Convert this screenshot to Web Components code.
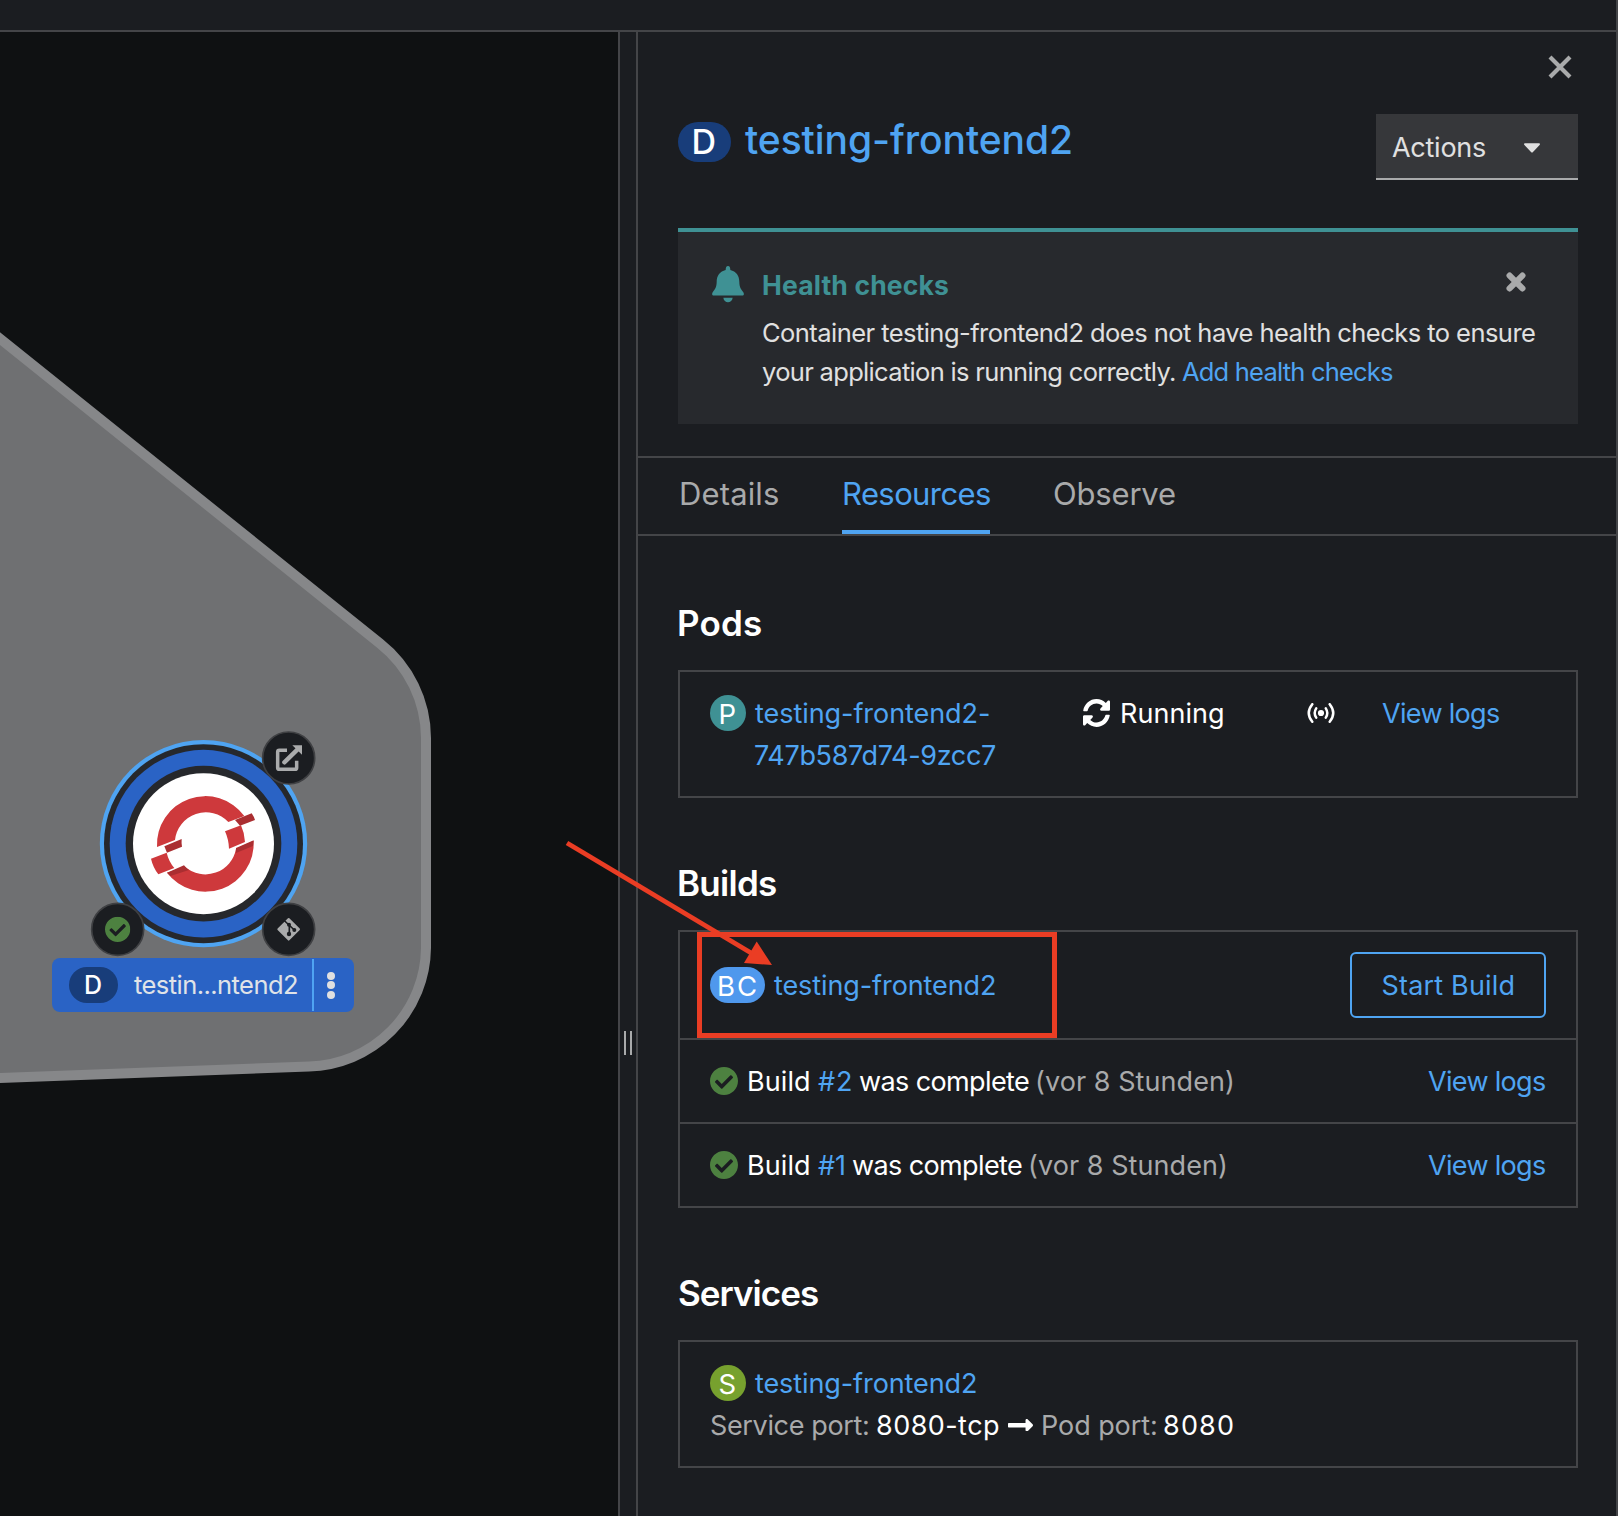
<!DOCTYPE html>
<html lang="en">
<head>
<meta charset="utf-8">
<title>Topology</title>
<style>
html,body{margin:0;padding:0;background:#1b1d21}
body{width:1618px;height:1516px;overflow:hidden;font-family:Inter,"Liberation Sans",sans-serif}
</style>
</head>
<body>
<console-shell></console-shell>
<script>
const BASE = `<style>
*{box-sizing:border-box}
.link{color:#4fa4f2}
.muted{color:#a9aaab}
</style>`;
const define = (name, html, extra) => customElements.define(name, class extends HTMLElement {
  constructor(){ super(); this.attachShadow({mode:'open'}); }
  connectedCallback(){
    if(!this.shadowRoot.childNodes.length){
      const t = document.createElement('template');
      t.innerHTML = BASE + (typeof html === 'function' ? html(this) : html);
      this.shadowRoot.append(t.content.cloneNode(true));
    }
    if(extra) extra(this);
  }
});

// A run of text tracked so that its visible glyphs fill the given width.
const ctx = document.createElement('canvas').getContext('2d');
define('ink-text', `<style>:host{display:inline-block;white-space:pre;flex:none}span{display:inline-block;transform:translateY(var(--drop,0px))}</style><span><slot></slot></span>`, el => {
  const w = +el.getAttribute('w'), text = el.textContent, cs = getComputedStyle(el);
  ctx.font = `${cs.fontWeight} ${cs.fontSize} ${cs.fontFamily}`;
  const m = ctx.measureText(text);
  el.style.width = w + 'px';
  if(text.length > 1) el.style.letterSpacing = ((w - m.actualBoundingBoxLeft - m.actualBoundingBoxRight) / (text.length - 1)).toFixed(3) + 'px';
  el.shadowRoot.querySelector('span').style.marginLeft = m.actualBoundingBoxLeft.toFixed(2) + 'px';
});

const ICONS = {
  check:['8 8 496 496','<path d="M504 256c0 136.967-111.033 248-248 248S8 392.967 8 256 119.033 8 256 8s248 111.033 248 248zM227.314 387.314l184-184c6.248-6.248 6.248-16.379 0-22.627l-22.627-22.627c-6.248-6.249-16.379-6.249-22.628 0L216 308.118l-70.059-70.059c-6.248-6.248-16.379-6.248-22.628 0l-22.627 22.627c-6.248 6.248-6.248 16.379 0 22.627l104 104c6.249 6.249 16.379 6.249 22.628.001z"/>'],
  sync:['8 8 496 496','<path d="M370.72 133.28C339.458 104.008 298.888 87.962 255.848 88c-77.458.068-144.328 53.178-162.791 126.85-1.344 5.363-6.122 9.15-11.651 9.15H24.103c-7.498 0-13.194-6.807-11.807-14.176C33.933 94.924 134.813 8 256 8c66.448 0 126.791 26.136 171.315 68.685L463.03 40.97C478.149 25.851 504 36.559 504 57.941V192c0 13.255-10.745 24-24 24H345.941c-21.382 0-32.09-25.851-16.971-40.971l41.75-41.749zM32 296h134.059c21.382 0 32.09 25.851 16.971 40.971l-41.75 41.75c31.262 29.273 71.835 45.319 114.876 45.28 77.418-.07 144.315-53.144 162.787-126.849 1.344-5.363 6.122-9.15 11.651-9.15h57.304c7.498 0 13.194 6.807 11.807 14.176C478.067 417.076 377.187 504 256 504c-66.448 0-126.791-26.136-171.315-68.685L48.97 471.03C33.851 486.149 8 475.441 8 454.059V320c0-13.255 10.745-24 24-24z"/>'],
  bell:['156 152 96 110','<path d="M204 152c-5 0-7 5-7 12C180 168 170 181 170 200C170 216 164 223 158 231C155 236 156 241 162 241H246C252 241 253 236 250 231C244 223 238 216 238 200C238 181 228 168 211 164C211 157 209 152 204 152ZM190 248H218C217 257 211 261.500 204 261.500C197 261.500 191 257 190 248Z"/>'],
  close:['0 0 24 24','<path d="M2 2L22 22M22 2L2 22" fill="none" stroke="currentColor" stroke-width="4.200"/>'],
  times:['0 0 20 20','<path d="M3.600 3.600L16.400 16.400M16.400 3.600L3.600 16.400" fill="none" stroke="currentColor" stroke-width="6.200" stroke-linecap="round"/>'],
  caret:['0 0 16 10','<path d="M1 .3H15C16.100 .3 16.300 1.200 15.600 1.900L9 8.900C8.300 9.600 7.700 9.600 7 8.900L.4 1.900C-.3 1.200-.1 .3 1 .3Z"/>'],
  antenna:['0 0 28 20','<circle cx="14" cy="10" r="3.100"/><path d="M9.200 5.300Q6.200 10 9.200 14.700M18.800 5.300Q21.800 10 18.800 14.700M5.300 1.200Q-1.800 10 5.300 18.800M22.700 1.200Q29.800 10 22.700 18.800" fill="none" stroke="currentColor" stroke-width="2.500" stroke-linecap="round"/>'],
  arrow:['0 145 448 222','<path d="M313.941 216H12c-6.627 0-12 5.373-12 12v56c0 6.627 5.373 12 12 12h301.941v46.059c0 21.382 25.851 32.090 40.971 16.971l86.059-86.059c9.373-9.373 9.373-24.569 0-33.941l-86.059-86.059c-15.119-15.119-40.971-4.411-40.971 16.971V216z"/>']
};
define('ui-icon', el => {
  const [vb, body] = ICONS[el.getAttribute('name')];
  return `<style>:host{display:block;flex:none;width:${el.getAttribute('w')}px;height:${el.getAttribute('h')}px}svg{display:block;width:100%;height:100%;fill:currentColor}</style><svg viewBox="${vb}" preserveAspectRatio="none">${body}</svg>`;
});

define('resource-badge', `<style>
:host{display:flex;flex:none;align-items:center;justify-content:center;width:36px;height:36px;border-radius:18px;color:#fff;font-size:27.500px;line-height:36px}
:host([kind=P]){background:#3f9194}
:host([kind=S]){background:#77a12e}
:host([kind=BC]){width:55px;background:#4f98ed}
:host([kind=D]){width:53px;height:40px;border-radius:20px;background:#183d7a;font-size:34px;line-height:40px;font-weight:500}
:host([small]){width:49px;height:36px;border-radius:18px;font-size:25px;line-height:36px;font-weight:450}
</style><slot></slot>`);

define('node-label', `<style>
:host{display:flex;align-items:center;width:302px;height:54px;border-radius:8px;background:#2a63c5;color:#e0e3e8;font-size:25.500px;line-height:54px;padding-left:17px}
.name{margin-left:16px}
.menu{margin-left:auto;width:42px;height:52px;border-left:2px solid #4fa4f2;display:flex;flex-direction:column;align-items:center;justify-content:center;gap:1.500px;padding-right:6px}
.menu i{width:8px;height:8px;border-radius:50%;background:#e0e0e0}
</style><resource-badge kind="D" small><ink-text w="15">D</ink-text></resource-badge><ink-text class="name" w="163">testin...ntend2</ink-text><div class="menu"><i></i><i></i><i></i></div>`);

define('topology-canvas', `<style>
:host{display:block;position:relative;width:618px;background:#0f1112;overflow:hidden}
svg{display:block}
node-label{position:absolute;left:52px;top:926px}
</style>
<svg width="618" height="1484" viewBox="0 32 618 1484">
<path d="M-30 314.600L380 643.500A121 121 0 0 1 426 738V948A120 120 0 0 1 309 1066.500L-30 1079V314.600Z" fill="#6f7072" stroke="#868789" stroke-width="10"/>
<g transform="translate(40 720) scale(.33333)">
<circle cx="490.500" cy="371" r="311" fill="#4fa4f2"/><circle cx="490.500" cy="371" r="298.500" fill="#26282c"/><circle cx="490.500" cy="371" r="281.500" fill="#2a63c5"/><circle cx="490.500" cy="371" r="233.500" fill="#26282c"/><circle cx="490.500" cy="371" r="211.500" fill="#fff"/>
<g fill="#ce393c">
<path d="M351 381A145 145 0 0 1 613 288L565 306A93 93 0 0 0 405 360Z"/>
<path d="M641 362A145 145 0 0 1 381 458L435 440A93 93 0 0 0 588 386Z"/>
<path d="M555 334L603 316Q614 340 615 366L567 386Q566 358 555 334Z"/>
<path d="M333 416L380 398Q386 424 403 444L355 463Q339 442 333 416Z"/></g>
<g fill="#aa2e31"><path d="M585 300L635 280Q642 290 645 300L600 317Z"/><path d="M373 379L425 357Q424 370 426 380L381 398Z"/><path d="M588 384L641 361L639 378L588 399Z"/><path d="M381 458L432 436Q438 444 447 450L391 468Z"/></g>
<g fill="#1b1d21" stroke="#3f4043" stroke-width="5"><circle cx="746" cy="114" r="78"/><circle cx="233" cy="628" r="78"/><circle cx="746" cy="628" r="78"/></g>
<g fill="none" stroke="#aaabac"><path d="M741 91H718Q713 91 713 96V143Q713 148 718 148H765Q770 148 770 143V122" stroke-width="10.500"/><path d="M733 127L772 89" stroke-width="13" stroke-linecap="round"/></g><path d="M757 76H786V104Z" fill="#aaabac"/>
<svg x="195" y="590" width="76" height="76" viewBox="8 8 496 496" fill="#4d8140">${ICONS.check[1]}</svg>
<path d="M746 597L777 628L746 659L715 628Z" fill="#aaabac" stroke="#aaabac" stroke-width="6" stroke-linejoin="round"/>
<g stroke="#1b1d21" stroke-width="5" fill="none"><path d="M731 600L763 630M748 613V642"/></g><g fill="#1b1d21"><circle cx="747" cy="614" r="6"/><circle cx="747" cy="642" r="6.500"/><circle cx="763" cy="630" r="6"/></g>
</g></svg>
<node-label></node-label>`);

define('panel-splitter', `<style>:host{display:flex;gap:4px;justify-content:center;align-items:flex-start;width:20px;border:solid #444548;border-width:0 2px;background:#1b1d21;padding-top:999px}i{width:2px;height:24px;background:#a9aaab}</style><i></i><i></i>`);

define('panel-header', `<style>
:host{display:flex;flex:none;flex-direction:column;padding:23px 38px 0 40px}
ui-icon{color:#a9aaab}
.x{margin:0 6px 35px auto}
.row{display:flex;align-items:flex-start;height:66px}
resource-badge{margin-top:8px}
.title{font-size:39px;line-height:58px;margin:-3px auto 0 14px;font-weight:450}
.act{display:flex;align-items:center;width:202px;height:66px;background:#36373a;border-bottom:2px solid #a9aaab;padding-left:16px;color:#e0e0e0;font-size:27px;line-height:60px;padding-top:3px}
.act ui-icon{color:#e0e0e0;margin:1px 0 0 38px}
</style><ui-icon class="x" name="close" w="24" h="24"></ui-icon>
<div class="row"><resource-badge kind="D"><ink-text w="22">D</ink-text></resource-badge><ink-text class="title link" w="326">testing-frontend2</ink-text><div class="act"><ink-text w="93">Actions</ink-text><ui-icon name="caret" w="16" h="10" style="margin-left:39px"></ui-icon></div></div>`);

define('health-alert', `<style>
:host{display:flex;flex:none;align-items:flex-start;height:196px;margin:48px 38px 32px 40px;background:#27292d;border-top:4px solid #3f9194;color:#e0e0e0;font-size:25.500px}
.bell{color:#3f9194;margin:34px 19px 0 34px}
.body{margin-top:33px;display:flex;flex-direction:column;align-items:flex-start;line-height:39px;width:743px}
.h{color:#3f9194;font-weight:700;font-size:26.500px;line-height:40px;margin-bottom:8px}
.l{display:flex;gap:7px;margin-left:-1px}
.t{color:#a9aaab;margin-top:40px}
</style><ui-icon class="bell" name="bell" w="32" h="36.500"></ui-icon>
<div class="body"><ink-text class="h" w="185">Health checks</ink-text><ink-text w="772">Container testing-frontend2 does not have health checks to ensure</ink-text>
<div class="l"><ink-text w="413">your application is running correctly.</ink-text><ink-text class="link" w="211">Add health checks</ink-text></div></div>
<ui-icon class="t" name="times" w="20" h="20"></ui-icon>`);

define('panel-tabs', `<style>
:host{display:flex;flex:none;gap:64px;height:80px;border:solid #444548;border-width:2px 0;padding-left:41px;color:#a9aaab;font-size:31px;line-height:60px}
div{height:76px;padding:6px 0 0 2px}
.on{border-bottom:4px solid #4fa4f2;color:#4fa4f2}
div:last-child{padding-left:0}
</style><div><ink-text w="97">Details</ink-text></div><div class="on"><ink-text w="146">Resources</ink-text></div><div><ink-text w="121">Observe</ink-text></div>`);

define('panel-section', `<style>
:host{display:block;flex:none;margin:0 38px 62px 40px;color:#fff;font-size:27px;line-height:42px}
h2{margin:0 0 24px 1px;height:46px;font-size:35px;line-height:46px;font-weight:570}
.box{border:2px solid #444548;--drop:1px}
</style><h2><slot name="title"></slot></h2><div class="box"><slot></slot></div>`);

define('pod-row', `<style>
:host{display:flex;padding:20px 30px;height:124px}
.name{display:flex;flex-direction:column;margin-left:9px;width:328px}
resource-badge{margin-top:3px}
.sync{margin:7px 12px 0 0}
.ant{margin:11px 47px 0 84px}
</style><resource-badge kind="P"><ink-text w="15">P</ink-text></resource-badge>
<div class="name link"><ink-text w="234">testing-frontend2-</ink-text><ink-text w="240">747b587d74-9zcc7</ink-text></div>
<ui-icon class="sync" name="sync" w="27" h="28"></ui-icon><ink-text w="101">Running</ink-text><ui-icon class="ant" name="antenna" w="28" h="20"></ui-icon><ink-text class="link" w="117">View logs</ink-text>`);

define('build-config-row', `<style>
:host{display:flex;align-items:center;height:108px;border-bottom:2px solid #444548;padding:0 30px}
.link{margin-left:9px}
button{all:unset;box-sizing:border-box;margin-left:auto;width:196px;height:66px;border:2px solid #4fa4f2;border-radius:6px;color:#4fa4f2;display:flex;align-items:center;justify-content:center}
</style><resource-badge kind="BC"><ink-text w="37">BC</ink-text></resource-badge><ink-text class="link" w="221">testing-frontend2</ink-text><button><ink-text w="131">Start Build</ink-text></button>`);

define('build-row', el => `<style>
:host{display:flex;align-items:center;height:82px;padding:0 31px 0 30px}
:host([divided]){height:84px;border-bottom:2px solid #444548}
ui-icon{color:#4d8140;margin-right:11px}
.t{display:flex;gap:8px}
.logs{margin-left:auto}
</style><ui-icon name="check" w="28" h="28"></ui-icon><div class="t"><ink-text w="60">Build</ink-text><ink-text class="link" w="${el.getAttribute('nw')}" style="margin-left:1px">#${el.getAttribute('number')}</ink-text><ink-text w="170">was complete</ink-text><ink-text class="muted" w="195">(vor 8 Stunden)</ink-text></div><ink-text class="link logs" w="117">View logs</ink-text>`);

define('service-row', `<style>
:host{display:block;height:124px;padding:20px 30px}
div{display:flex;align-items:center;height:42px}
.n{margin-left:9px}
.p{padding-left:1px}
</style><div><resource-badge kind="S"><ink-text w="17">S</ink-text></resource-badge><ink-text class="link n" w="221">testing-frontend2</ink-text></div>
<div class="p"><ink-text class="muted" w="157">Service port:</ink-text><ink-text w="122" style="margin-left:9px">8080-tcp</ink-text><ui-icon name="arrow" w="25" h="12.500" style="margin:0 10px 0 9px"></ui-icon><ink-text class="muted" w="113">Pod port:</ink-text><ink-text w="69" style="margin-left:8px">8080</ink-text></div>`);

define('callout-arrow', `<style>:host{display:block;position:absolute;left:560px;top:832px;pointer-events:none}svg{display:block}</style>
<svg width="510" height="216" viewBox="560 832 510 216"><rect x="699.500" y="934.500" width="355" height="101" fill="none" stroke="#ea3d24" stroke-width="5"/><path d="M567 843L752 953.500" stroke="#ea3d24" stroke-width="4.800"/><path d="M772 965L756.700 941.500L744 963Z" fill="#ea3d24"/></svg>`);

define('side-panel', `<style>:host{display:flex;flex-direction:column;width:980px;background:#1b1d21;border-right:2px solid #444548}</style>
<panel-header></panel-header><health-alert></health-alert><panel-tabs></panel-tabs>
<panel-section style="margin-top:64px"><ink-text slot="title" w="82">Pods</ink-text><pod-row></pod-row></panel-section>
<panel-section><ink-text slot="title" w="97">Builds</ink-text><build-config-row></build-config-row><build-row number="2" nw="33" divided></build-row><build-row number="1" nw="26"></build-row></panel-section>
<panel-section style="margin-bottom:0"><ink-text slot="title" w="139">Services</ink-text><service-row></service-row></panel-section>`);

define('console-shell', `<style>
:host{display:flex;flex-direction:column;width:1618px;height:1516px;position:relative;overflow:hidden}
.top{height:32px;flex:none;border-bottom:2px solid #444548;display:flex;justify-content:flex-end}
.top i{width:2px;background:#444548}
.main{display:flex;height:1484px}
</style><div class="top"><i></i></div><div class="main"><topology-canvas></topology-canvas><panel-splitter></panel-splitter><side-panel></side-panel></div><callout-arrow></callout-arrow>`);
</script>
</body>
</html>
